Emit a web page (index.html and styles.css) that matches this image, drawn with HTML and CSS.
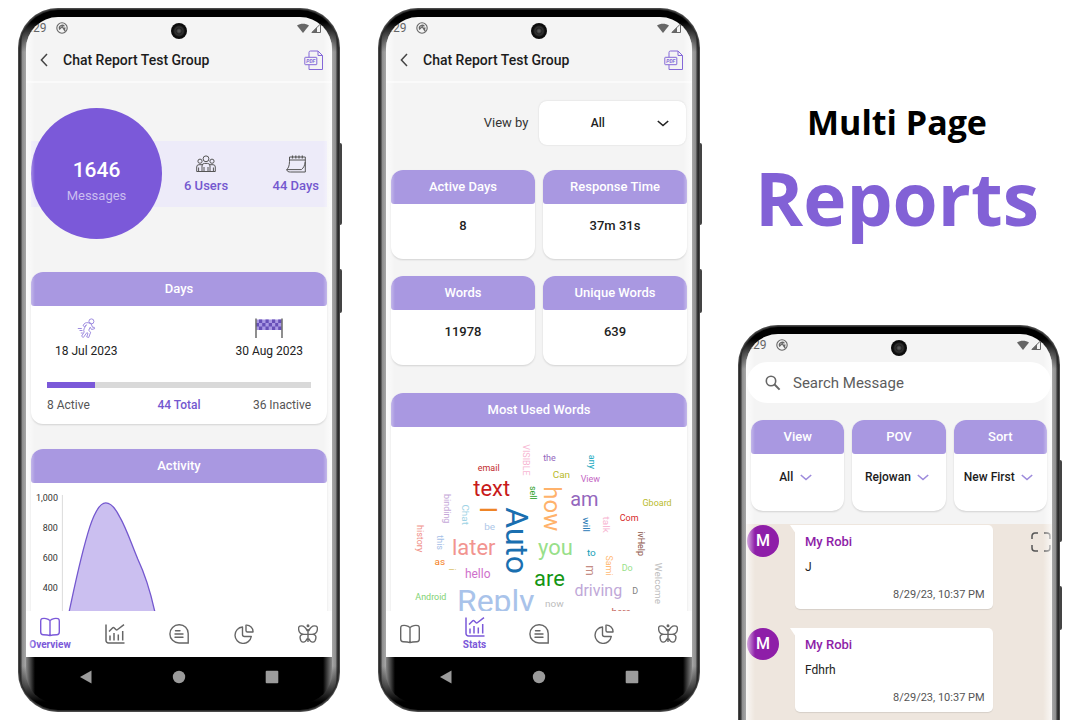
FILE: index.html
```html
<!DOCTYPE html>
<html lang="en">
<head>
<meta charset="utf-8">
<meta name="viewport" content="width=device-width, initial-scale=1">
<title>Multi Page Reports</title>
<link rel="stylesheet" href="styles.css">
</head>
<body>
<svg class="sprite" aria-hidden="true">
  <symbol id="i-app" viewBox="0 0 12 12"><circle cx="6" cy="6" r="5.2" fill="none" stroke="currentColor" stroke-width="1.1"/><path d="M3.4 6.6a2.8 2.8 0 0 1 5-2.2M8.8 5.4a2.8 2.8 0 0 1-1 2.8M3.2 7.6l3-3 3 4.6" fill="none" stroke="currentColor" stroke-width="1.3"/></symbol>
  <symbol id="i-wifi" viewBox="0 0 12 10"><path d="M6 10 0 2.6C3.4 .2 8.6 .2 12 2.6Z" fill="currentColor"/></symbol>
  <symbol id="i-signal" viewBox="0 0 10 10"><path d="M.8 9.5h8.7V.9Z" fill="none" stroke="currentColor"/><path d="M.5 9.8 6 4.2v5.6Z" fill="currentColor"/></symbol>
  <symbol id="i-back" viewBox="0 0 8 14"><path d="M7 1 1.400 7 7 13" fill="none" stroke="currentColor" stroke-width="1.500"/></symbol>
  <symbol id="i-users" viewBox="0 0 20 18"><g fill="none" stroke="currentColor"><circle cx="10" cy="3.800" r="2.900"/><circle cx="4" cy="6.200" r="2.100"/><circle cx="16" cy="6.200" r="2.100"/><path d="M6 16.500V11a2.600 2.600 0 0 1 2.600-2.600h2.800A2.600 2.600 0 0 1 14 11v5.500ZM8 12v4.500M12 12v4.500M6 16.500H.700V12A2.300 2.300 0 0 1 3 9.700h3M14 16.500h5.300V12A2.300 2.300 0 0 0 17 9.700h-3M2.600 12.500v4M17.400 12.500v4"/></g></symbol>
  <symbol id="i-cal" viewBox="0 0 20 18"><g fill="none" stroke="currentColor"><path d="M3.500 2h15.800v15H4.500M3.500 2v4.500C3.500 11 2 13.800.600 14.600h14.800C17.600 13 19 10 19.200 7M.700 14.700C1.200 16.500 2.500 17 4.500 17M3.500 5h15.800"/><path d="M6.500.500v3M9.800.500v3M13 .500v3M16.300.500v3" stroke-width="1.200"/></g></symbol>
  <symbol id="i-run" viewBox="0 0 18 20"><g fill="none" stroke="currentColor" stroke-width=".9"><circle cx="14.400" cy="3.400" r="2.500"/><path d="M11.300 4.800C9 4.200 7.200 5.200 6 7.600l1.600 1 1.900-1.800C7.300 9.700 6 12.300 7.200 14l-2.600 4.200 1.700 1.300 3.500-4.800 1.200.6-1.300 3.600 2 .6 2-5.300-2-1.800 1.500-3.200 1.400 2.300 3-.8-.4-1.500-1.600.1-1.800-4.200ZM.800 10.500h4M2.500 12.500h3M3.800 15h2"/></g></symbol>
  <symbol id="i-flag" viewBox="0 0 28 20"><rect x="1.500" y="1.500" width="25" height="10.500" fill="#a998e4"/><path d="M4 1.500h3.200v3.500H4ZM10.500 1.500h3.200v3.500h-3.200ZM17 1.500h3.200v3.500H17ZM23.200 1.500h3v3.500h-3ZM1.500 5H4v3.500H1.500ZM7.200 5h3.300v3.500H7.200ZM13.700 5H17v3.500h-3.300ZM20.200 5h3v3.500h-3ZM4 8.500h3.200V12H4ZM10.500 8.500h3.200V12h-3.200ZM17 8.500h3.200V12H17ZM23.200 8.500h3V12h-3Z" fill="#6750b8"/><path d="M1 .500V20M27 .500V20" stroke="#444" stroke-width="1.200"/></symbol>
  <symbol id="i-book" viewBox="0 0 20 20"><path d="M10 3.600C8 1.400 4 1 2 1.700.900 2.200.700 3 .700 4v11c0 1.800.9 2.700 2.500 2.700 2.800 0 5 .1 6.800.9 1.800-.8 4-.9 6.800-.9 1.600 0 2.500-.9 2.500-2.700V4c0-1-.2-1.800-1.300-2.300-2-.7-6-.3-8 1.900ZM10 3.600v15" fill="none" stroke="currentColor" stroke-width="1.400" stroke-linejoin="round"/></symbol>
  <symbol id="i-stats" viewBox="0 0 20 20"><path d="M1 .500V16.500A2.500 2.500 0 0 0 3.500 19H19.500M5 16.500v-5M9 16.500V9M13.300 16.500v-6M17.700 16.500V7M4 7.500 7.500 4c.7-.7 1.200-.6 1.800 0l1.500 1.500c.6.600 1.200.500 1.800 0L19 .700" fill="none" stroke="currentColor" stroke-width="1.500"/></symbol>
  <symbol id="i-chat" viewBox="0 0 20 20"><path d="M10 .800h.500A8.700 8.700 0 0 1 19.200 9.500V19H10a9.100 9.100 0 0 1 0-18.200ZM6.500 6.800H11M6 10h8M6 13.200h8" fill="none" stroke="currentColor" stroke-width="1.400" stroke-linecap="round"/></symbol>
  <symbol id="i-pie" viewBox="0 0 20 20"><path d="M8.500 3A8.200 8.200 0 1 0 17.300 12.500H10.500C9.200 12.500 8.500 11.800 8.500 10.500ZM12 1.200C16 .800 19.300 4 19 8h-5.500C12.500 8 12 7.500 12 6.500Z" fill="none" stroke="currentColor" stroke-width="1.400" stroke-linejoin="round"/></symbol>
  <symbol id="i-fly" viewBox="0 0 20 20"><g fill="none" stroke="currentColor" stroke-width="1.400" stroke-linejoin="round"><path d="M9.300 7C7.500 3 4.500 1.300 1.800 2.200-.2 3 .500 7.500 2.200 9c.9.900 1.800 1.200 3 1.300-2.500.2-3.500 1.800-3 4.200C2.800 19 7 19.600 9.300 14.500M10.700 7c1.800-4 4.800-5.700 7.500-4.800 2 .8 1.300 5.300-.4 6.800-.9.900-1.800 1.200-3 1.300 2.500.2 3.500 1.800 3 4.200-.6 4.500-4.800 5.100-7.100 0M5 10.400h10M10 5v13"/><circle cx="10" cy="1.800" r=".8" fill="currentColor"/></g></symbol>
  <symbol id="i-down" viewBox="0 0 12 7"><path d="M.800 1 6 5.500 11.200 1" fill="none" stroke="currentColor" stroke-width="1.600"/></symbol>
  <symbol id="i-search" viewBox="0 0 16 16"><circle cx="6" cy="6" r="4.700" fill="none" stroke="currentColor" stroke-width="1.600"/><path d="m9.300 9.300 5.300 5.300" stroke="currentColor" stroke-width="2"/></symbol>
  <symbol id="i-full" viewBox="0 0 20 20"><path d="M1 7V4a3 3 0 0 1 3-3h3M13 1h3a3 3 0 0 1 3 3v3M19 13v3a3 3 0 0 1-3 3h-3M7 19H4a3 3 0 0 1-3-3v-3" fill="none" stroke="currentColor" stroke-width="1.500"/></symbol>
</svg>

<main class="stage">
  <section class="col">
    <div class="phone">
      <div class="camera"></div>
      <div class="screen">
        <div class="status"><span>:29</span><svg class="s-app"><use href="#i-app"/></svg><svg class="s-wifi"><use href="#i-wifi"/></svg><svg class="s-sig"><use href="#i-signal"/></svg></div>
        <header class="bar">
          <button class="icon-btn" aria-label="Back"><svg class="back"><use href="#i-back"/></svg></button>
          <h2>Chat Report Test Group</h2>
          <button class="icon-btn pdf-btn" aria-label="Export PDF"><svg class="i20" viewBox="0 0 20 20"><path d="M5 7V2.5A1.5 1.5 0 0 1 6.5 1H14l4.500 4.500v14H5V15M14 1v4.500h4.500" fill="none" stroke="currentColor"/><rect x=".8" y="7.300" width="12" height="7.400" rx=".6" fill="none" stroke="currentColor"/><text x="6.800" y="12.800" text-anchor="middle" class="pdf-tag">PDF</text></svg></button>
        </header>
        <div class="content">
          <div class="hero">
            <div class="total"><strong>1646</strong><span>Messages</span></div>
            <div class="facts">
              <div class="fact"><svg class="i20"><use href="#i-users"/></svg><span>6 Users</span></div>
              <div class="fact"><svg class="i20"><use href="#i-cal"/></svg><span>44 Days</span></div>
            </div>
          </div>
          <article class="card days">
            <h3>Days</h3>
            <div class="dates">
              <div class="date"><svg class="i20 run"><use href="#i-run"/></svg><span>18 Jul 2023</span></div>
              <div class="date"><svg class="flag"><use href="#i-flag"/></svg><span>30 Aug 2023</span></div>
            </div>
            <div class="track"><div class="fill" style="width:18.2%"></div></div>
            <div class="legend"><span>8 Active</span><b>44 Total</b><span>36 Inactive</span></div>
          </article>
          <article class="card">
            <h3>Activity</h3>
            <svg class="chart" viewBox="0 0 297 160" role="img" aria-label="Activity chart">
              <path d="M31.500 12V160" stroke="#dcdcdc"/>
              <g class="ticks"><text x="27" y="18">1,000</text><text x="27" y="48">800</text><text x="27" y="78">600</text><text x="27" y="108">400</text></g>
              <path d="M30 160 38.500 128C42 112 50 72 59 44 64 29 69 20 75 20c6 0 10 6 14 14 7 12 12 28 18 42 8 17 13 34 17 52l9 32Z" fill="#cbbff0" stroke="#7458cf" stroke-width="1.300"/>
            </svg>
          </article>
        </div>
        <nav class="tabs">
          <a href="#overview" class="on"><svg class="i20"><use href="#i-book"/></svg>Overview</a>
          <a href="#stats" aria-label="Stats"><svg class="i20"><use href="#i-stats"/></svg></a>
          <a href="#chat" aria-label="Chat"><svg class="i20"><use href="#i-chat"/></svg></a>
          <a href="#share" aria-label="Share"><svg class="i20"><use href="#i-pie"/></svg></a>
          <a href="#more" aria-label="More"><svg class="i20"><use href="#i-fly"/></svg></a>
        </nav>
      </div>
      <div class="keys"><svg viewBox="0 0 14 14"><path d="M1 7 12.500.500v13Z"/></svg><svg viewBox="0 0 14 14"><circle cx="7" cy="7" r="6.200"/></svg><svg viewBox="0 0 14 14"><rect x=".7" y=".7" width="12.600" height="12.600" rx="1"/></svg></div>
    </div>
  </section>

  <section class="col">
    <div class="phone">
      <div class="camera"></div>
      <div class="screen">
        <div class="status"><span>:29</span><svg class="s-app"><use href="#i-app"/></svg><svg class="s-wifi"><use href="#i-wifi"/></svg><svg class="s-sig"><use href="#i-signal"/></svg></div>
        <header class="bar">
          <button class="icon-btn" aria-label="Back"><svg class="back"><use href="#i-back"/></svg></button>
          <h2>Chat Report Test Group</h2>
          <button class="icon-btn pdf-btn" aria-label="Export PDF"><svg class="i20" viewBox="0 0 20 20"><path d="M5 7V2.5A1.5 1.5 0 0 1 6.5 1H14l4.500 4.500v14H5V15M14 1v4.500h4.500" fill="none" stroke="currentColor"/><rect x=".8" y="7.300" width="12" height="7.400" rx=".6" fill="none" stroke="currentColor"/><text x="6.800" y="12.800" text-anchor="middle" class="pdf-tag">PDF</text></svg></button>
        </header>
        <div class="content">
          <div class="viewby">
            <label for="viewby">View by</label>
            <div class="picker"><select id="viewby"><option>All</option></select><svg class="down"><use href="#i-down"/></svg></div>
          </div>
          <div class="tiles">
            <article class="card tile"><h3>Active Days</h3><p>8</p></article>
            <article class="card tile"><h3>Response Time</h3><p>37m 31s</p></article>
            <article class="card tile"><h3>Words</h3><p>11978</p></article>
            <article class="card tile"><h3>Unique Words</h3><p>639</p></article>
          </div>
          <article class="card">
            <h3>Most Used Words</h3>
            <svg class="cloud" viewBox="0 0 297 200">
              <g class="z9">
                <text x="98" y="44" fill="#c22a2a">email</text>
                <text x="159" y="34" fill="#9467bd">the</text>
                <text x="200" y="55" fill="#c466c4">View</text>
                <text x="267" y="79" fill="#b9bb2c">Gboard</text>
                <text x="239" y="94" fill="#d62728">Com</text>
                <text x="237" y="145" fill="#98df8a">Do</text>
                <text x="245" y="168" fill="#7f7f7f">D</text>
                <text x="40" y="174" fill="#7fd273">Android</text>
                <text transform="translate(132 33) rotate(90)" fill="#f7b6d2">VISIBLE</text>
                <text transform="translate(139 66) rotate(90)" fill="#2ca02c">sell</text>
                <text transform="translate(199 35) rotate(90)" fill="#17a9c0">any</text>
                <text transform="translate(53 82) rotate(90)" fill="#c5a8d8">binding</text>
                <text transform="translate(26 112) rotate(90)" fill="#f09088">history</text>
                <text transform="translate(46 116) rotate(90)" fill="#a5c0e8">this</text>
                <text transform="translate(248 117) rotate(90)" fill="#8c564b">ivHelp</text>
                <text transform="translate(216 139) rotate(90)" fill="#ffbb78">Sami</text>
                <text transform="translate(58 143) rotate(90)" fill="#dbc36d">i</text>
              </g>
              <g class="z10">
                <text x="171" y="51" fill="#b9bb2c">Can</text>
                <text x="99" y="103" fill="#aec7e8">be</text>
                <text x="201" y="129" fill="#17a0b8">to</text>
                <text x="49" y="138" fill="#f5801a">as</text>
                <text x="164" y="181" fill="#bdbdbd">now</text>
                <text x="231" y="189" fill="#c4635a">here</text>
                <text transform="translate(71 88) rotate(90)" fill="#9ed3e5">Chat</text>
                <text transform="translate(193 98) rotate(90)" fill="#1f77b4">will</text>
                <text transform="translate(213 98) rotate(90)" fill="#f7b6d2">talk</text>
                <text transform="translate(265 157) rotate(90)" fill="#bdbdbd">Welcome</text>
              </g>
              <text class="z12" x="87" y="152" fill="#cf70cb">hello</text>
              <text class="z12" transform="translate(196 144) rotate(90)" fill="#c48c84">m</text>
              <text class="z16" x="208" y="170" fill="#c0a8d8">driving</text>
              <g class="z22">
                <text x="101" y="69" fill="#c81a1a">text</text>
                <text x="83" y="128" fill="#f29490">later</text>
                <text x="165" y="128" fill="#98df8a">you</text>
                <text x="159" y="160" fill="#149614">are</text>
              </g>
              <text class="z20" x="194" y="79" fill="#9467bd">am</text>
              <g class="z24">
                <text transform="translate(89 83) rotate(90)" fill="#ee8426">I</text>
                <text transform="translate(154 82) rotate(90)" fill="#ffb26b">how</text>
              </g>
              <g class="z32">
                <text transform="translate(115 114) rotate(90)" fill="#1a6fb0">Auto</text>
                <text x="105" y="186" fill="#a9c3ea">Reply</text>
              </g>
            </svg>
          </article>
        </div>
        <nav class="tabs">
          <a href="#overview" aria-label="Overview"><svg class="i20"><use href="#i-book"/></svg></a>
          <a href="#stats" class="on"><svg class="i20"><use href="#i-stats"/></svg>Stats</a>
          <a href="#chat" aria-label="Chat"><svg class="i20"><use href="#i-chat"/></svg></a>
          <a href="#share" aria-label="Share"><svg class="i20"><use href="#i-pie"/></svg></a>
          <a href="#more" aria-label="More"><svg class="i20"><use href="#i-fly"/></svg></a>
        </nav>
      </div>
      <div class="keys"><svg viewBox="0 0 14 14"><path d="M1 7 12.500.500v13Z"/></svg><svg viewBox="0 0 14 14"><circle cx="7" cy="7" r="6.200"/></svg><svg viewBox="0 0 14 14"><rect x=".7" y=".7" width="12.600" height="12.600" rx="1"/></svg></div>
    </div>
  </section>

  <section class="col">
    <h1 class="title"><span>Multi Page</span><em>Reports</em></h1>
    <div class="phone">
      <div class="camera"></div>
      <div class="screen">
        <div class="status"><span>:29</span><svg class="s-app"><use href="#i-app"/></svg><svg class="s-wifi"><use href="#i-wifi"/></svg><svg class="s-sig"><use href="#i-signal"/></svg></div>
        <label class="search"><svg class="glass"><use href="#i-search"/></svg><input type="search" placeholder="Search Message" aria-label="Search Message"></label>
        <div class="filters">
          <article class="card filter"><h3><label for="f-view">View</label></h3><div><select id="f-view"><option>All</option></select><svg class="down"><use href="#i-down"/></svg></div></article>
          <article class="card filter"><h3><label for="f-pov">POV</label></h3><div><select id="f-pov"><option>Rejowan</option></select><svg class="down"><use href="#i-down"/></svg></div></article>
          <article class="card filter"><h3><label for="f-sort">Sort</label></h3><div><select id="f-sort"><option>New First</option></select><svg class="down"><use href="#i-down"/></svg></div></article>
        </div>
        <div class="thread">
          <button class="icon-btn expand" aria-label="Full screen"><svg class="i20"><use href="#i-full"/></svg></button>
          <div class="msg"><div class="avatar">M</div><div class="bubble"><h4>My Robi</h4><p>J</p><time>8/29/23, 10:37 PM</time></div></div>
          <div class="msg"><div class="avatar">M</div><div class="bubble"><h4>My Robi</h4><p>Fdhrh</p><time>8/29/23, 10:37 PM</time></div></div>
        </div>
      </div>
    </div>
  </section>
</main>
</body>
</html>
```

FILE: styles.css
```css
* { box-sizing: border-box; margin: 0; }
body { background: #fff; color: #222; font-family: Roboto, "Liberation Sans", sans-serif; font-size: 12px; line-height: 16px; }
button, select, input { font: inherit; color: inherit; border: 0; background: none; padding: 0; }
select { appearance: none; outline: 0; }
svg { display: block; flex: none; }
.sprite { position: absolute; width: 0; height: 0; }
.pdf-tag { font: italic 700 5px Roboto, sans-serif; fill: currentColor; }
.i20 { width: 20px; height: 20px; }

.stage { display: grid; grid-template-columns: repeat(3, minmax(0, 1fr)); height: 100vh; overflow: hidden; }
.col { padding: 8px 20px 0 18px; min-width: 0; }

/* Device frame */
.phone {
  position: relative; display: flex; flex-direction: column;
  height: calc(100vh - 16px); padding: 9px 8px;
  border-radius: 40px;
  background:
    linear-gradient(to bottom, #000 14px, transparent 44px),
    linear-gradient(to top, #000 10px, transparent 46px),
    linear-gradient(to right, #444 1px, #333 3px, #8c8c8c 4px, #a8a8a8 8px, #a8a8a8 calc(100% - 8px), #8c8c8c calc(100% - 4px), #333 calc(100% - 3px), #444 calc(100% - 1px));
  box-shadow: inset 0 0 0 1px #4a4a4a, inset 0 0 0 2px #2a2a2a;
}
.phone::before, .phone::after { content: ""; position: absolute; right: -2px; width: 3px; background: #444; border-radius: 0 2px 2px 0; }
.phone::before { top: 135px; height: 82px; }
.phone::after { top: 261px; height: 44px; }
.camera { position: absolute; z-index: 2; top: 15px; left: calc(50% - 8px); width: 16px; height: 16px; border-radius: 50%; background: radial-gradient(circle, #555 0 1px, #222 3px, #333 4px, #0c0c0c 6px); }
.screen { position: relative; flex: 1; min-height: 0; display: flex; flex-direction: column; background: #f4f4f4; border-radius: 32px 32px 0 0; overflow: hidden; }
.screen::after { content: ""; position: absolute; inset: 0; pointer-events: none; background: linear-gradient(to right, rgba(255,255,255,.7), transparent 9px, transparent calc(100% - 9px), rgba(255,255,255,.7)); }
.keys { display: flex; align-items: center; justify-content: space-between; height: 46px; padding: 0 53px 6px; border-radius: 0 0 30px 30px; background: linear-gradient(to right, #888, #000 9px, #000 calc(100% - 9px), #888); }
.keys svg { width: 14px; height: 14px; fill: #9b9b9b; }

.status { display: flex; align-items: center; height: 22px; padding: 0 11px 0 4px; color: #666; }
.s-app { width: 12px; height: 12px; margin-left: 10px; }
.s-wifi { width: 12px; height: 10px; margin-left: auto; }
.s-sig { width: 10px; height: 10px; margin-left: 2px; }
.bar { display: flex; align-items: center; height: 44px; padding: 0 8px 0 14px; border-bottom: 2px solid #fafafa; }
.bar h2 { flex: 1; margin-left: 15px; font-size: 14px; font-weight: 500; color: #1c1c1c; }
.back { width: 8px; height: 14px; color: #444; }
.pdf-btn { color: #8468d8; }
.content { flex: 1; min-height: 0; overflow: hidden; padding: 0 5px; }

/* Cards */
.card { background: #fff; border-radius: 12px; box-shadow: 0 1px 2px rgba(0,0,0,.14); overflow: hidden; }
.card h3 { padding: 9px 0; border-radius: 0 0 3px 3px; background: #a998e1; color: #fff; font-size: 13px; font-weight: 500; line-height: 16px; text-align: center; }

/* Overview */
.hero { display: flex; align-items: center; margin: 25px 0 33px; background: linear-gradient(#edebf9, #edebf9) center / 100% 66px no-repeat; }
.total { display: flex; flex-direction: column; align-items: center; width: 131px; height: 131px; padding-top: 50px; border-radius: 50%; background: #7b59d9; color: #fff; }
.total strong { font-size: 21px; font-weight: 500; line-height: 24px; }
.total span { margin-top: 6px; font-size: 13px; color: #cabdf0; }
.facts { flex: 1; display: flex; justify-content: space-between; padding: 0 8px 0 22px; }
.fact { display: flex; flex-direction: column; align-items: center; gap: 4px; color: #555; }
.fact span { font-size: 13px; font-weight: 500; color: #7458cf; }
.days { margin-bottom: 25px; padding-bottom: 11px; }
.dates { display: flex; justify-content: space-between; padding: 12px 24px 0; }
.date { display: flex; flex-direction: column; align-items: center; gap: 5px; }
.run { color: #9480dc; }
.flag { width: 28px; height: 20px; }
.track { height: 6px; margin: 23px 16px 9px; background: #d9d9d9; }
.fill { height: 100%; background: #7b59d9; }
.legend { display: grid; grid-template-columns: 1fr auto 1fr; padding: 0 16px; color: #555; }
.legend b { font-weight: 500; color: #7458cf; }
.legend span:last-child { text-align: right; }
.chart, .cloud { width: 100%; height: auto; }
.ticks { font-size: 9px; fill: #333; text-anchor: end; }

/* Tab bar */
.tabs { display: flex; justify-content: space-between; height: 46px; padding: 0 2px; background: #fff; }
.tabs a { display: flex; flex-direction: column; align-items: center; justify-content: center; width: 44px; color: #666; font-size: 10px; font-weight: 700; line-height: 14px; text-decoration: none; }
.tabs .on { color: #7b59d9; gap: 1px; }

/* Stats */
.viewby { display: flex; align-items: center; justify-content: flex-end; gap: 10px; padding: 18px 1px 25px 0; font-size: 13px; color: #333; }
.picker { display: flex; align-items: center; width: 50%; height: 44px; padding-right: 17px; border-radius: 8px; background: #fff; box-shadow: 0 0 2px rgba(0,0,0,.14); color: #222; }
.picker select { flex: 1; height: 100%; font-size: 12px; font-weight: 500; text-align: center; text-align-last: center; }
.down { width: 12px; height: 7px; }
.tiles { display: grid; grid-template-columns: 1fr 1fr; gap: 17px 8px; margin-bottom: 28px; }
.tile p { padding: 14px 0 25px; font-size: 13px; font-weight: 500; text-align: center; }
.cloud text { text-anchor: middle; }
.z9 { font-size: 9px; }
.z10 { font-size: 10px; }
.z12 { font-size: 12px; }
.z16 { font-size: 16px; }
.z20 { font-size: 20px; }
.z22 { font-size: 22px; }
.z24 { font-size: 24px; }
.z32 { font-size: 32px; }

/* Heading */
.title { padding: 90px 4px 76px 0; font-family: "Open Sans", "Noto Sans", sans-serif; font-weight: 700; text-align: center; }
.title span { display: block; font-size: 34px; line-height: 48px; color: #000; }
.title em { display: block; font-size: 73px; line-height: 103px; font-style: normal; color: #8261d6; }

/* Messages */
.search { display: flex; align-items: center; gap: 12px; height: 41px; margin: 6px 1px 17px; padding: 0 18px; border-radius: 21px; background: #fff; color: #666; }
.glass { width: 16px; height: 16px; }
.search input { flex: 1; min-width: 0; outline: 0; font-size: 15px; }
.search input::placeholder { color: #5c5c5c; opacity: 1; }
.filters { display: grid; grid-template-columns: repeat(3, 1fr); gap: 8px; padding: 0 5px; }
.filter div { display: flex; align-items: center; justify-content: center; gap: 6px; padding: 15px 4px 26px 0; color: #9d8bdc; }
.filter select { font-weight: 500; color: #1c1c1c; }
.thread { position: relative; flex: 1; margin-top: 13px; padding: 1px 1px 0; background: #eee6de; }
.expand { position: absolute; top: 8px; right: 1px; color: #555; }
.msg { display: flex; align-items: flex-start; gap: 16px; margin-bottom: 19px; }
.avatar { flex: none; width: 32px; height: 32px; border-radius: 50%; background: #8e1ea8; color: #fff; font-size: 16px; font-weight: 500; line-height: 32px; text-align: center; }
.bubble { position: relative; width: 65%; padding: 9px 8px 6px 10px; border-radius: 0 5px 5px 5px; background: #fff; box-shadow: 0 1px 1px rgba(0,0,0,.1); }
.bubble::before { content: ""; position: absolute; top: 0; left: -5px; width: 6px; height: 9px; background: #fff; clip-path: polygon(0 0, 100% 0, 100% 100%); }
.bubble h4 { margin-bottom: 9px; font-size: 13px; font-weight: 500; color: #8e1ea8; }
.bubble p { margin-bottom: 12px; }
.bubble time { display: block; font-size: 11px; text-align: right; color: #555; }
```
